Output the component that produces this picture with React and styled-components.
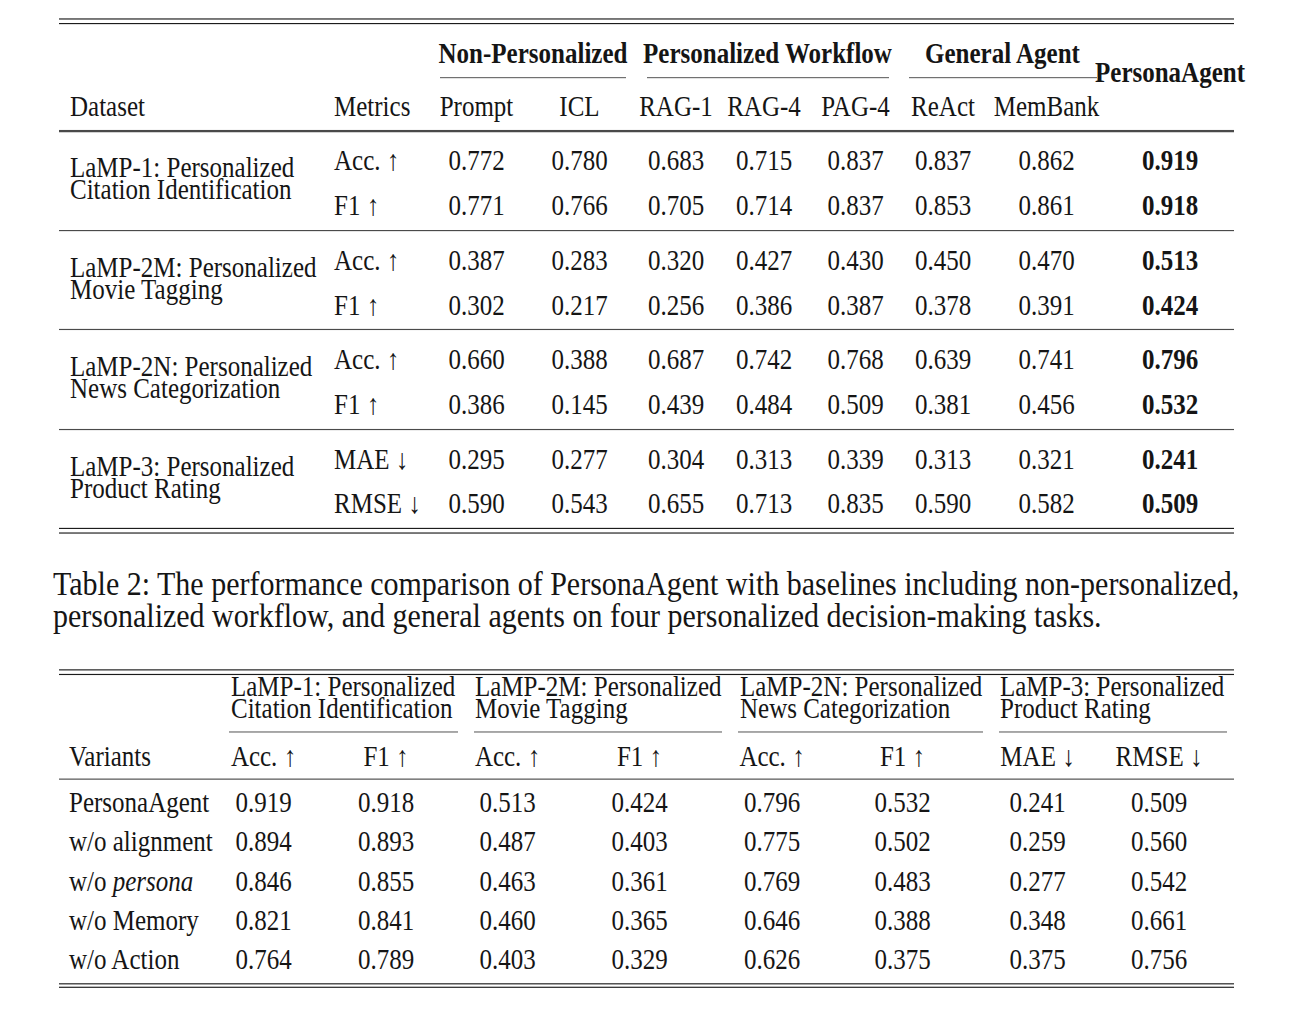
import styled, { createGlobalStyle } from "styled-components";

const GlobalStyle = createGlobalStyle`
  html, body {
    margin: 0;
    background: #ffffff;
  }
  body {
    font-family: "Liberation Serif", "Times New Roman", serif;
    color: #151515;
  }
`;

const Frame = styled.div`
  width: 1294px;
  height: 1012px;
  overflow: hidden;
`;

// the reference is a pdf render stretched a little in height
const Page = styled.main`
  width: 1294px;
  padding: 16.3px 0 0 53px;
  box-sizing: border-box;
  transform: scaleY(1.15);
  transform-origin: 0 0;
`;

const Table = styled.section`
  width: 1175px;
  margin-left: 6px;
  margin-top: ${(p) => p.$top}px;
  font-size: 25px;
  line-height: 1;
`;

const DoubleRule = styled.div`
  height: 2.6px;
  border-top: 1.8px solid #1c1c1c;
  border-bottom: 1.8px solid #1c1c1c;
`;

const MidRule = styled.div`
  height: 1.2px;
  background: #4a4a4a;
`;

const Grid = styled.div`
  display: grid;
  grid-template-columns: ${(p) => p.$cols};
  align-items: center;
  box-sizing: border-box;
`;

const GroupHeadRow = styled(Grid)`
  height: 45.7px;
  padding-top: 5px;
`;

const HeadRow = styled(Grid)`
  height: ${(p) => p.$h}px;
  padding-top: ${(p) => p.$pt || 0}px;
`;

const CMidRow = styled(Grid)`
  height: 1px;
  align-items: stretch;
`;

const CMid = styled.div`
  grid-column: ${(p) => p.$col};
  margin: 0 ${(p) => p.$r}px 0 ${(p) => p.$l}px;
  background: #6a6a6a;
`;

const Cell = styled.div`
  display: flex;
  align-items: center;
  justify-content: ${(p) => (p.$left ? "flex-start" : "center")};
  padding-left: ${(p) => p.$pl || 0}px;
  white-space: nowrap;
  font-weight: ${(p) => (p.$bold ? 700 : 400)};
  grid-column: ${(p) => p.$col || "auto"};
`;

const GroupTitle = styled(Cell)`
  font-weight: 700;
`;

const CornerTitle = styled(Cell)`
  font-weight: 700;
  align-self: end;
  margin-bottom: -8px;
`;

const DataGroup = styled(Grid)`
  grid-template-rows: 38.7px 38.7px;
  padding: 6px 0 1.9px;
`;

const DatasetLabel = styled.div`
  grid-column: 1;
  grid-row: 1 / 3;
  padding: 0 0 8px 11px;
  line-height: 19.1px;
  white-space: nowrap;
`;

const Caption = styled.p`
  margin: 29.2px 0 0;
  font-size: 30px;
  line-height: 27.8px;
  white-space: nowrap;
`;

const GroupLabelRow = styled(Grid)`
  padding: 0.5px 0 10.8px;
  align-items: start;
`;

const GroupLabel = styled.div`
  grid-column: ${(p) => p.$col};
  padding-left: ${(p) => p.$pl}px;
  line-height: 19.1px;
  white-space: nowrap;
`;

const Body = styled.div`
  padding: 2.4px 0 3.4px;
`;

const BodyRow = styled(Grid)`
  height: 34.15px;
`;

const Up = () => <>&nbsp;↑</>;
const Down = () => <>&nbsp;↓</>;

const COLS1 = "264px 107px 93px 113px 80px 96px 87px 88px 119px 128px";
const COLS2 = "162px 85px 160px 83px 181px 84px 177px 93px 150px";

const groups1 = [
  {
    name: ["LaMP-1: Personalized", "Citation Identification"],
    rows: [
      ["Acc.", "up", ["0.772", "0.780", "0.683", "0.715", "0.837", "0.837", "0.862", "0.919"]],
      ["F1", "up", ["0.771", "0.766", "0.705", "0.714", "0.837", "0.853", "0.861", "0.918"]],
    ],
  },
  {
    name: ["LaMP-2M: Personalized", "Movie Tagging"],
    rows: [
      ["Acc.", "up", ["0.387", "0.283", "0.320", "0.427", "0.430", "0.450", "0.470", "0.513"]],
      ["F1", "up", ["0.302", "0.217", "0.256", "0.386", "0.387", "0.378", "0.391", "0.424"]],
    ],
  },
  {
    name: ["LaMP-2N: Personalized", "News Categorization"],
    rows: [
      ["Acc.", "up", ["0.660", "0.388", "0.687", "0.742", "0.768", "0.639", "0.741", "0.796"]],
      ["F1", "up", ["0.386", "0.145", "0.439", "0.484", "0.509", "0.381", "0.456", "0.532"]],
    ],
  },
  {
    name: ["LaMP-3: Personalized", "Product Rating"],
    rows: [
      ["MAE", "down", ["0.295", "0.277", "0.304", "0.313", "0.339", "0.313", "0.321", "0.241"]],
      ["RMSE", "down", ["0.590", "0.543", "0.655", "0.713", "0.835", "0.590", "0.582", "0.509"]],
    ],
  },
];

const baselines = ["Prompt", "ICL", "RAG-1", "RAG-4", "PAG-4", "ReAct", "MemBank"];

const variants = [
  [<span>PersonaAgent</span>, ["0.919", "0.918", "0.513", "0.424", "0.796", "0.532", "0.241", "0.509"]],
  [<span>w/o alignment</span>, ["0.894", "0.893", "0.487", "0.403", "0.775", "0.502", "0.259", "0.560"]],
  [<span>w/o <i>persona</i></span>, ["0.846", "0.855", "0.463", "0.361", "0.769", "0.483", "0.277", "0.542"]],
  [<span>w/o Memory</span>, ["0.821", "0.841", "0.460", "0.365", "0.646", "0.388", "0.348", "0.661"]],
  [<span>w/o Action</span>, ["0.764", "0.789", "0.403", "0.329", "0.626", "0.375", "0.375", "0.756"]],
];

const tasks2 = [
  { col: "2 / 4", pl: 10, name: ["LaMP-1: Personalized", "Citation Identification"] },
  { col: "4 / 6", pl: 9, name: ["LaMP-2M: Personalized", "Movie Tagging"] },
  { col: "6 / 8", pl: 10, name: ["LaMP-2N: Personalized", "News Categorization"] },
  { col: "8 / 10", pl: 9, name: ["LaMP-3: Personalized", "Product Rating"] },
];

const metrics2 = [
  ["Acc.", "up"], ["F1", "up"], ["Acc.", "up"], ["F1", "up"],
  ["Acc.", "up"], ["F1", "up"], ["MAE", "down"], ["RMSE", "down"],
];

const Metric = ({ label, dir }) => (
  <span>
    {label}
    {dir === "up" ? <Up /> : <Down />}
  </span>
);

const Row1 = ({ m, dir, vals, ri }) => (
  <>
    <Cell $left $pl={11} style={{ gridRow: ri + 1, gridColumn: 2 }}>
      <Metric label={m} dir={dir} />
    </Cell>
    {vals.map((v, i) => (
      <Cell key={i} $bold={i === vals.length - 1} style={{ gridRow: ri + 1, gridColumn: i + 3 }}>
        {v}
      </Cell>
    ))}
  </>
);

const MainTable = () => (
  <Table $top={0}>
    <DoubleRule />
    <GroupHeadRow $cols={COLS1}>
      <GroupTitle $col="3 / 5">Non-Personalized</GroupTitle>
      <GroupTitle $col="5 / 8">Personalized Workflow</GroupTitle>
      <GroupTitle $col="8 / 10">General Agent</GroupTitle>
      <CornerTitle $col="10">PersonaAgent</CornerTitle>
    </GroupHeadRow>
    <CMidRow $cols={COLS1}>
      <CMid $col="3 / 5" $l={10} $r={10} />
      <CMid $col="5 / 8" $l={11} $r={10} />
      <CMid $col="8 / 10" $l={10} $r={9} />
    </CMidRow>
    <HeadRow $cols={COLS1} $h={45.8} $pt={4.6}>
      <Cell $left $pl={11}>Dataset</Cell>
      <Cell $left $pl={11}>Metrics</Cell>
      {baselines.map((b) => (
        <Cell key={b}>{b}</Cell>
      ))}
    </HeadRow>
    {groups1.map((g, gi) => (
      <div key={g.name[0]}>
        <MidRule />
        <DataGroup $cols={COLS1}>
          <DatasetLabel>
            {g.name[0]}
            <br />
            {g.name[1]}
          </DatasetLabel>
          {g.rows.map(([m, dir, vals], ri) => (
            <Row1 key={m} m={m} dir={dir} vals={vals} ri={ri} />
          ))}
        </DataGroup>
        {gi === groups1.length - 1 && <DoubleRule />}
      </div>
    ))}
  </Table>
);

const AblationTable = () => (
  <Table $top={33.5}>
    <DoubleRule />
    <GroupLabelRow $cols={COLS2}>
      {tasks2.map((t) => (
        <GroupLabel key={t.col} $col={t.col} $pl={t.pl}>
          {t.name[0]}
          <br />
          {t.name[1]}
        </GroupLabel>
      ))}
    </GroupLabelRow>
    <CMidRow $cols={COLS2}>
      <CMid $col="2 / 4" $l={8} $r={8} />
      <CMid $col="4 / 6" $l={8} $r={8} />
      <CMid $col="6 / 8" $l={8} $r={8} />
      <CMid $col="8 / 10" $l={8} $r={7} />
    </CMidRow>
    <HeadRow $cols={COLS2} $h={40}>
      <Cell $left $pl={10}>Variants</Cell>
      {metrics2.map(([m, dir], i) => (
        <Cell key={i}>
          <Metric label={m} dir={dir} />
        </Cell>
      ))}
    </HeadRow>
    <MidRule />
    <Body>
      {variants.map(([name, vals], i) => (
        <BodyRow key={i} $cols={COLS2}>
          <Cell $left $pl={10}>{name}</Cell>
          {vals.map((v, j) => (
            <Cell key={j}>{v}</Cell>
          ))}
        </BodyRow>
      ))}
    </Body>
    <DoubleRule />
  </Table>
);

const App = () => (
  <>
    <GlobalStyle />
    <Frame>
      <Page>
        <MainTable />
        <Caption>
          Table 2: The performance comparison of PersonaAgent with baselines including non-personalized,
          <br />
          personalized workflow, and general agents on four personalized decision-making tasks.
        </Caption>
        <AblationTable />
      </Page>
    </Frame>
  </>
);

export default App;
